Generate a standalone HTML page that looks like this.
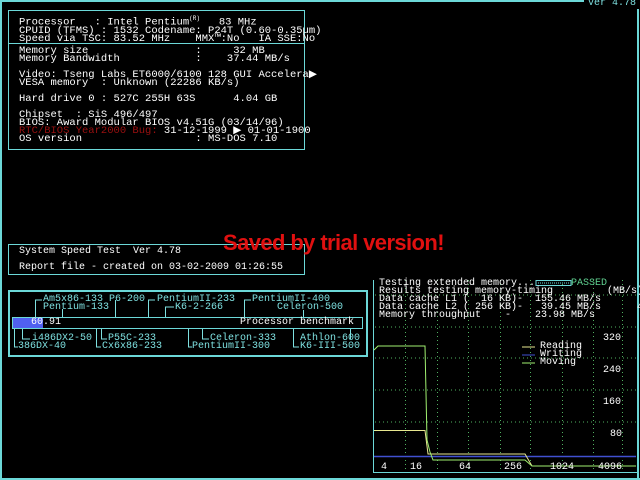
<!DOCTYPE html><html><head><style>
body{margin:0;width:640px;height:480px;background:#000;overflow:hidden;position:relative;font-family:"Liberation Mono",monospace;font-size:10.5px;line-height:8px;color:#fff}
.a{position:absolute;white-space:pre}
.s{font-size:10px}
.b{position:absolute;border:1px solid #6cd8d8;box-sizing:border-box}
.c{color:#7ee0e0;font-size:10px}
</style></head><body>
<div class="b" style="left:0;top:0;width:640px;height:480px;border-width:2px 2px 2px 2px;border-right:none"></div>
<div class="a" style="left:584px;top:0;width:56px;height:10px;background:#000"></div>
<div class="a s" style="left:588px;top:0;color:#7ee0e0">Ver 4.78</div>
<div class="b" style="left:637px;top:9px;width:2px;height:471px;border-width:0 0 0 2px"></div>

<div class="b" style="left:8px;top:10px;width:297px;height:140px"></div>
<div class="b" style="left:8px;top:43px;width:297px;height:1px;border-width:1px 0 0 0"></div>
<div class="a" style="left:19px;top:15px">Processor   : Intel Pentium<sup style="font-size:6px">(R)</sup>   83 MHz
CPUID (TFMS) : 1532 Codename: P24T (0.60-0.35µm)
Speed via TSC: 83.52 MHz    MMX™:No   IA SSE:No</div>
<div class="a" style="left:19px;top:47px">Memory size                 :     32 MB
Memory Bandwidth            :    37.44 MB/s

Video: Tseng Labs ET6000/6100 128 GUI Accelera▶
VESA memory  : Unknown (22286 KB/s)

Hard drive 0 : 527C 255H 63S      4.04 GB

Chipset  : SiS 496/497
BIOS: Award Modular BIOS v4.51G (03/14/96)
<span style="color:#9a1010">RTC/BIOS Year2000 Bug:</span> 31-12-1999 ▶ 01-01-1900
OS version                  : MS-DOS 7.10</div>

<div class="b" style="left:8px;top:244px;width:297px;height:31px"></div>
<div class="a s" style="left:19px;top:248px">System Speed Test  Ver 4.78</div>
<div class="a s" style="left:19px;top:264px">Report file - created on 03-02-2009 01:26:55</div>
<div class="a" style="left:223px;top:231px;font-family:'Liberation Sans',sans-serif;font-weight:bold;font-size:22px;line-height:24px;color:#e01010;letter-spacing:-0.6px">Saved by trial version!</div>

<div class="b" style="left:8px;top:290px;width:360px;height:67px;border-width:2px"></div>
<div class="b" style="left:12px;top:317px;width:351px;height:12px"></div>
<div class="a" style="left:13px;top:318px;width:30px;height:10px;background:#5060f0"></div>
<div class="a s" style="left:31px;top:319px">60.91</div>
<div class="a s" style="left:240px;top:319px">Processor benchmark</div>
<svg class="a" style="left:0;top:285px" width="370" height="75" viewBox="0 285 370 75" fill="none" stroke="#7ee0e0" stroke-width="1">
<path d="M35.5 317V300H42M62.5 317V309M115.5 317V300M148.5 317V300H155M165.5 317V307H174M244.5 317V300H251M303.5 317V310"/>
<path d="M14.5 329V347H18M22.5 329V339H30M96.5 329V347H101M101.5 329V339H107M188.5 329V347H192M202.5 329V339H209M293.5 329V347H299M350.5 329V339"/>
</svg>
<div class="a c" style="left:43px;top:296px">Am5x86-133 P6-200</div>
<div class="a c" style="left:157px;top:296px">PentiumII-233</div>
<div class="a c" style="left:252px;top:296px">PentiumII-400</div>
<div class="a c" style="left:43px;top:304px">Pentium-133</div>
<div class="a c" style="left:175px;top:304px">K6-2-266</div>
<div class="a c" style="left:277px;top:304px">Celeron-500</div>
<div class="a c" style="left:32px;top:335px">i486DX2-50</div>
<div class="a c" style="left:108px;top:335px">P55C-233</div>
<div class="a c" style="left:210px;top:335px">Celeron-333</div>
<div class="a c" style="left:300px;top:335px">Athlon-600</div>
<div class="a c" style="left:18px;top:343px">386DX-40</div>
<div class="a c" style="left:102px;top:343px">Cx6x86-233</div>
<div class="a c" style="left:192px;top:343px">PentiumII-300</div>
<div class="a c" style="left:300px;top:343px">K6-III-500</div>

<svg class="a" style="left:370px;top:275px" width="270" height="205" viewBox="370 275 270 205" fill="none">
<path d="M373.5 280V472.5H637" stroke="#6cd8d8"/>
<g stroke="#50b060" stroke-dasharray="1 3">
<path d="M375 327H636M375 358H636M375 390H636M375 422H636M375 295H636"/>
<path d="M405.5 280V470M437.5 280V470M468.5 280V470M500.5 280V470M530.5 280V470M562.5 280V470M593.5 280V470M622.5 280V470"/>
</g>
<path d="M374 456.5H636" stroke="#4050d0" stroke-width="1.5"/>
<path d="M374 430.5H425L428 454H525L532 466H636" stroke="#e8e890"/>
<path d="M374 350L378 346H425L427 440L430 452L433 460H525L532 466H636" stroke="#a0f070"/>
<path d="M522 347H535" stroke="#e8e890"/><path d="M522 355H535" stroke="#4050d0"/><path d="M522 363H535" stroke="#a0f070"/>
<rect x="536" y="280.5" width="35" height="5" stroke="#6cd8d8"/>
<path d="M538 283H569" stroke="#6cd8d8" stroke-dasharray="1 1"/>
</svg>
<div class="a s" style="left:379px;top:280px">Testing extended memory...      <span style="color:#5fd090">PASSED</span>
Results testing memory-timing         (MB/s)
Data cache L1 (  16 KB)-  155.46 MB/s
Data cache L2 ( 256 KB)-   39.45 MB/s      400
Memory throughput    -    23.98 MB/s</div>
<div class="a s" style="left:603px;top:335px">320</div>
<div class="a s" style="left:603px;top:367px">240</div>
<div class="a s" style="left:603px;top:399px">160</div>
<div class="a s" style="left:610px;top:431px">80</div>
<div class="a s" style="left:540px;top:343px">Reading
Writing
Moving</div>
<div class="a s" style="left:381px;top:464px">4</div>
<div class="a s" style="left:410px;top:464px">16</div>
<div class="a s" style="left:459px;top:464px">64</div>
<div class="a s" style="left:504px;top:464px">256</div>
<div class="a s" style="left:550px;top:464px">1024</div>
<div class="a s" style="left:598px;top:464px">4096</div>
</body></html>
